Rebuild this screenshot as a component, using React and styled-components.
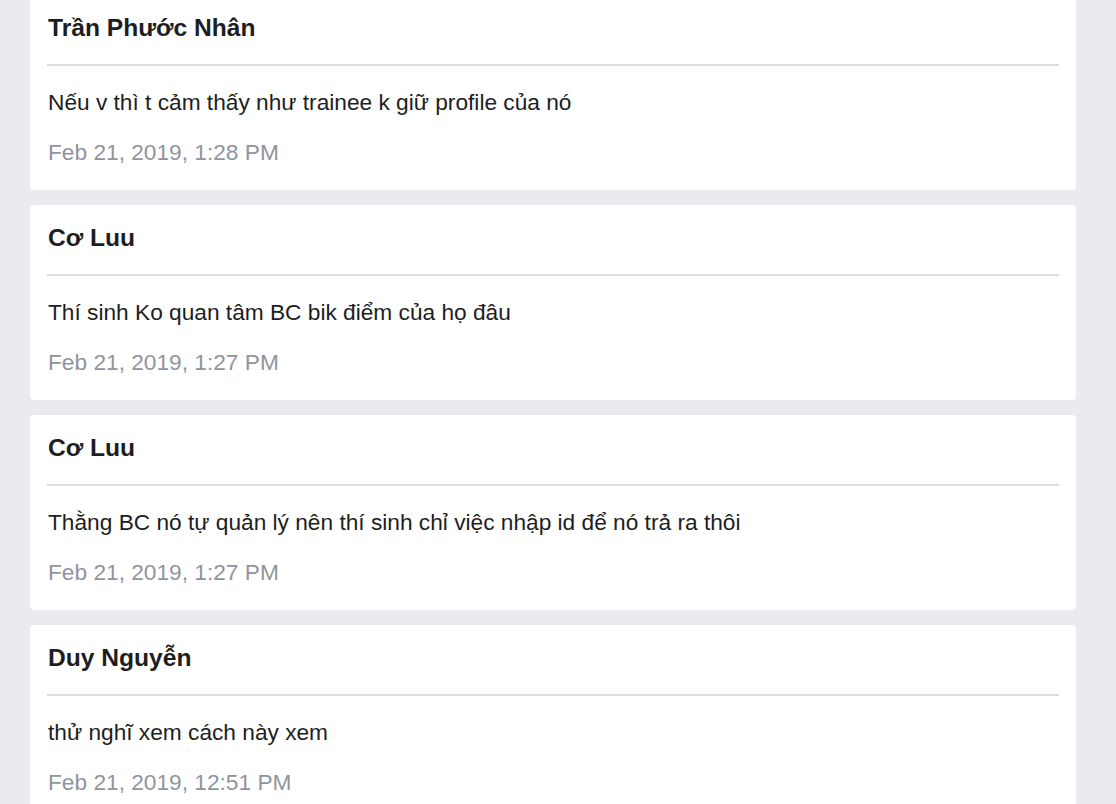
import styled, { createGlobalStyle } from "styled-components";

const GlobalStyle = createGlobalStyle`
  html, body {
    margin: 0;
    padding: 0;
    background: #e9ebee;
    font-family: "Liberation Sans", Arial, sans-serif;
  }
`;

const Feed = styled.main`
  display: flex;
  flex-direction: column;
  gap: 15px;
  margin-top: -5px;
  padding: 0 40px 20px 30px;
`;

const Card = styled.article`
  background: #fff;
  border-radius: 4px;
  padding: 18px 17px 23px;
  height: 195px;
  box-sizing: border-box;
`;

const Author = styled.h3`
  margin: 0 0 0 1px;
  font-size: 24.6px;
  line-height: 30px;
  font-weight: 700;
  color: #1c1e21;
`;

const Divider = styled.hr`
  border: 0;
  height: 2px;
  background: #dadde1;
  margin: 21px 0 21px;
`;

const Message = styled.p`
  margin: 0 0 0 1px;
  font-size: 22.7px;
  line-height: 30px;
  color: #1c1e21;
`;

const Time = styled.div`
  margin: 20px 0 0 1px;
  font-size: 22.7px;
  line-height: 30px;
  color: #90949c;
`;

const comments = [
  {
    author: "Trần Phước Nhân",
    text: "Nếu v thì t cảm thấy như trainee k giữ profile của nó",
    time: "Feb 21, 2019, 1:28 PM",
  },
  {
    author: "Cơ Luu",
    text: "Thí sinh Ko quan tâm BC bik điểm của họ đâu",
    time: "Feb 21, 2019, 1:27 PM",
  },
  {
    author: "Cơ Luu",
    text: "Thằng BC nó tự quản lý nên thí sinh chỉ việc nhập id để nó trả ra thôi",
    time: "Feb 21, 2019, 1:27 PM",
  },
  {
    author: "Duy Nguyễn",
    text: "thử nghĩ xem cách này xem",
    time: "Feb 21, 2019, 12:51 PM",
  },
];

export default function App() {
  return (
    <>
      <GlobalStyle />
      <Feed>
        {comments.map((c, i) => (
          <Card key={i}>
            <Author>{c.author}</Author>
            <Divider />
            <Message>{c.text}</Message>
            <Time>{c.time}</Time>
          </Card>
        ))}
      </Feed>
    </>
  );
}
